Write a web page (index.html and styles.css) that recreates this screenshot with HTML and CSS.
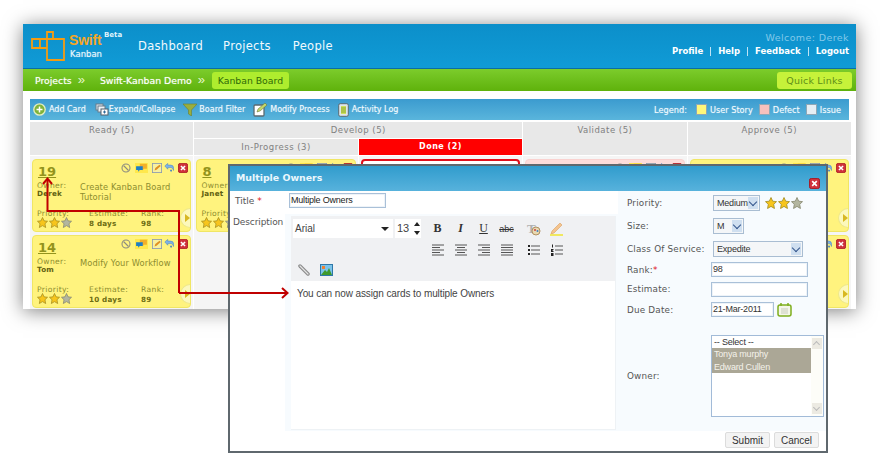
FILE: index.html
```html
<!DOCTYPE html>
<html lang="en">
<head>
<meta charset="utf-8">
<title>Swift Kanban</title>
<link rel="stylesheet" href="styles.css">
</head>
<body>
<svg class="defs" width="0" height="0" aria-hidden="true">
  <symbol id="star" viewBox="0 0 24 24"><polygon points="12,1 15.4,8.4 23,9.3 17.4,14.7 18.9,23 12,18.8 5.1,23 6.6,14.7 1,9.3 8.6,8.4" fill="#f7c51c" stroke="#a08a20" stroke-width="1.6"/></symbol>
  <symbol id="star-off" viewBox="0 0 24 24"><polygon points="12,1 15.4,8.4 23,9.3 17.4,14.7 18.9,23 12,18.8 5.1,23 6.6,14.7 1,9.3 8.6,8.4" fill="#b3b6a0" stroke="#85876c" stroke-width="1.6"/></symbol>
  <symbol id="ban" viewBox="0 0 12 12"><circle cx="6" cy="6" r="4.8" fill="none" stroke="#8c8c80" stroke-width="1.3"/><path d="M3 3l6 6" stroke="#8c8c80" stroke-width="1.3"/></symbol>
  <symbol id="chat" viewBox="0 0 14 12"><path d="M5 1h8.500v6H10l-2 2V7H5z" fill="#f2b02a"/><path d="M.5 4h8v4.500H5l-2 2v-2H.5z" fill="#1f7fc4"/></symbol>
  <symbol id="edit" viewBox="0 0 12 12"><rect x=".5" y=".5" width="11" height="11" fill="#f8f0a0" stroke="#8a9ab0"/><path d="M3 9l1-3 5-4 1.500 1.500-5 4.500z" fill="#e09020"/></symbol>
  <symbol id="undo" viewBox="0 0 12 12"><path d="M1 3.500L4.500.5v2H8a3.500 3.500 0 0 1 3.500 3.500v3C11 7 9.500 5.500 8 5.500H4.500v2z" fill="#7fb2e6" stroke="#3f7fc5" stroke-width=".6"/><path d="M7 8h3l-1.500 3z" fill="#3f7fc5"/></symbol>
  <symbol id="close" viewBox="0 0 12 12"><rect x=".5" y=".5" width="11" height="11" rx="2" fill="#d0313c" stroke="#a9141e"/><path d="M3.500 3.500l5 5M8.500 3.500l-5 5" stroke="#fff" stroke-width="1.800"/></symbol>
  <symbol id="align-left" viewBox="0 0 12 12"><path d="M0 1h12M0 3.500h8M0 6h12M0 8.500h8M0 11h12" stroke="#555" fill="none"/></symbol>
  <symbol id="align-center" viewBox="0 0 12 12"><path d="M0 1h12M2 3.500h8M0 6h12M2 8.500h8M0 11h12" stroke="#555" fill="none"/></symbol>
  <symbol id="align-right" viewBox="0 0 12 12"><path d="M0 1h12M4 3.500h8M0 6h12M4 8.500h8M0 11h12" stroke="#555" fill="none"/></symbol>
  <symbol id="align-full" viewBox="0 0 12 12"><path d="M0 1h12M0 3.500h12M0 6h12M0 8.500h12M0 11h12" stroke="#555" fill="none"/></symbol>
  <symbol id="list-ul" viewBox="0 0 12 12"><path d="M3 2h9M3 6h9M3 10h9" stroke="#555" fill="none"/><path d="M0 1h2v2H0zM0 5h2v2H0zM0 9h2v2H0z" fill="#222"/></symbol>
  <symbol id="list-ol" viewBox="0 0 12 12"><path d="M4 2h8M4 6h8M4 10h8" stroke="#555" fill="none"/><path d="M1 .5h1v3H1zM0 5h2.500v1L1 7h1.500v1H0zM0 9h2.500v3H0z" fill="#222"/></symbol>
</svg>

<div class="app">
  <header class="topbar">
    <div class="logo">
      <svg class="logo-mark" viewBox="0 0 36 30" width="36" height="30"><path d="M16 8h17v21H16zM16 8V1h6v7M16 8H1v9h15M9 8v9" fill="none" stroke="#f39c12" stroke-width="1.800"/></svg>
      <div class="logo-text"><span class="logo-swift">Swift</span><span class="logo-kanban">Kanban</span></div>
      <span class="logo-beta">Beta</span>
    </div>
    <nav class="mainnav"><span>Dashboard</span><span>Projects</span><span>People</span></nav>
    <div class="userbox">
      <div class="welcome">Welcome: Derek</div>
      <div class="userlinks"><span>Profile</span><i></i><span>Help</span><i></i><span>Feedback</span><i></i><span>Logout</span></div>
    </div>
  </header>

  <div class="crumbbar">
    <span class="crumb">Projects</span><span class="chev">&raquo;</span>
    <span class="crumb crumb-second">Swift-Kanban Demo</span><span class="chev">&raquo;</span>
    <span class="crumb-current">Kanban Board</span>
    <span class="quick">Quick Links</span>
  </div>

  <div class="content">
    <div class="toolbar">
      <span class="tool tool-add"><svg width="13" height="13" viewBox="0 0 13 13"><circle cx="6.500" cy="6.500" r="5.700" fill="#7fb33a" stroke="#e4efc4" stroke-width="1.300"/><path d="M6.500 3.500v6M3.500 6.500h6" stroke="#fff" stroke-width="1.500"/></svg>Add Card</span>
      <span class="tool tool-expand"><svg width="14" height="13" viewBox="0 0 14 13"><rect x="1" y="1" width="7" height="6" fill="#dfe7ee" stroke="#6b7c8a"/><rect x="3" y="3" width="7" height="6" fill="#eef2f6" stroke="#6b7c8a"/><rect x="6" y="6" width="7" height="6" fill="#fff" stroke="#52606c"/><path d="M9.500 7.500v3M8 9h3" stroke="#2a6a9a"/></svg>Expand/Collapse</span>
      <span class="tool tool-filter"><svg width="14" height="13" viewBox="0 0 14 13"><path d="M0 1h14L8.500 7v6L5.500 11V7z" fill="#9aae3e" stroke="#6f7f2a" stroke-width=".6"/></svg>Board Filter</span>
      <span class="tool tool-modify"><svg width="15" height="15" viewBox="0 0 15 15"><rect x="1" y="3" width="10" height="11" rx="1" fill="#fff" stroke="#5a6a72" stroke-width="1.300"/><path d="M4 10l1-3 7-6 2 2-7 6z" fill="#c4d66a" stroke="#5a6a2a" stroke-width=".5"/></svg>Modify Process</span>
      <span class="tool tool-log"><svg width="11" height="14" viewBox="0 0 11 14"><rect x=".7" y=".7" width="9.600" height="12.600" rx="1.500" fill="#dfe6ea" stroke="#5a6a72"/><rect x="3" y="3" width="5" height="8" fill="#cfe05c"/><path d="M3 5h5M3 7h5M3 9h5" stroke="#6f8f20" stroke-width=".7"/></svg>Activity Log</span>
      <span class="legend">
        <span class="legend-title">Legend:</span>
        <i class="swatch swatch-story"></i><span>User Story</span>
        <i class="swatch swatch-defect"></i><span>Defect</span>
        <i class="swatch swatch-issue"></i><span>Issue</span>
      </span>
    </div>

    <div class="board-head">
      <div class="hc hc-ready">Ready (5)</div>
      <div class="hc hc-develop">Develop (5)</div>
      <div class="hc hc-validate">Validate (5)</div>
      <div class="hc hc-approve">Approve (5)</div>
      <div class="hc">In-Progress (3)</div>
      <div class="hc hc-done">Done (2)</div>
    </div>

    <div class="lanes">
      <div class="lane">
        <article class="card">
          <div class="card-top"><a class="card-no">19</a><span class="card-icons"><svg><use href="#ban"/></svg><svg><use href="#chat"/></svg><svg><use href="#edit"/></svg><svg><use href="#undo"/></svg><svg><use href="#close"/></svg></span></div>
          <div class="card-mid"><div class="owner"><span>Owner:</span><b>Derek</b></div><div class="card-title">Create Kanban Board Tutorial</div></div>
          <div class="card-foot"><div class="f1"><span>Priority:</span><em><svg><use href="#star"/></svg><svg><use href="#star"/></svg><svg><use href="#star-off"/></svg></em></div><div class="f2"><span>Estimate:</span><b>8 days</b></div><div class="f3"><span>Rank:</span><b>98</b></div></div>
          <span class="card-tab"></span>
        </article>
        <article class="card">
          <div class="card-top"><a class="card-no">14</a><span class="card-icons"><svg><use href="#ban"/></svg><svg><use href="#chat"/></svg><svg><use href="#edit"/></svg><svg><use href="#undo"/></svg><svg><use href="#close"/></svg></span></div>
          <div class="card-mid"><div class="owner"><span>Owner:</span><b>Tom</b></div><div class="card-title">Modify Your Workflow</div></div>
          <div class="card-foot"><div class="f1"><span>Priority:</span><em><svg><use href="#star"/></svg><svg><use href="#star"/></svg><svg><use href="#star-off"/></svg></em></div><div class="f2"><span>Estimate:</span><b>10 days</b></div><div class="f3"><span>Rank:</span><b>89</b></div></div>
          <span class="card-tab"></span>
        </article>
      </div>
      <div class="lane">
        <article class="card">
          <div class="card-top"><a class="card-no">8</a><span class="card-icons"><svg><use href="#ban"/></svg><svg><use href="#chat"/></svg><svg><use href="#edit"/></svg><svg><use href="#undo"/></svg><svg><use href="#close"/></svg></span></div>
          <div class="card-mid"><div class="owner"><span>Owner:</span><b>Janet</b></div></div>
          <div class="card-foot"><div class="f1"><span>Priority:</span><em><svg><use href="#star"/></svg><svg><use href="#star"/></svg><svg><use href="#star-off"/></svg></em></div></div>
        </article>
      </div>
      <div class="lane"><div class="card card-selected"></div></div>
      <div class="lane"><div class="card card-defect"><div class="card-top"><span></span><span class="card-icons"><svg><use href="#ban"/></svg><svg><use href="#chat"/></svg><svg><use href="#edit"/></svg><svg><use href="#undo"/></svg><svg><use href="#close"/></svg></span></div></div></div>
      <div class="lane">
        <div class="card"><div class="card-top"><span></span><span class="card-icons"><svg><use href="#ban"/></svg><svg><use href="#chat"/></svg><svg><use href="#edit"/></svg><svg><use href="#undo"/></svg><svg><use href="#close"/></svg></span></div><span class="card-tab"></span></div>
        <div class="card"><div class="card-top"><span></span><span class="card-icons"><svg><use href="#ban"/></svg><svg><use href="#chat"/></svg><svg><use href="#edit"/></svg><svg><use href="#undo"/></svg><svg><use href="#close"/></svg></span></div><span class="card-tab"></span></div>
      </div>
    </div>
  </div>
</div>

<section class="modal">
  <header class="modal-head"><h2>Multiple Owners</h2><svg class="modal-close"><use href="#close"/></svg></header>
  <div class="modal-body">
    <div class="modal-left">
      <div class="title-row"><label class="lbl-title">Title <b>*</b></label><div class="field title-field">Multiple Owners</div></div>
      <div class="desc-row">
        <label class="lbl-desc">Description</label>
        <div class="editor-wrap">
          <div class="editor">
            <div class="ed-tools">
              <div class="ed-row">
                <div class="ed-font">Arial<i class="caret"></i></div>
                <div class="ed-size">13<span class="spin"><i class="up"></i><i class="down"></i></span></div>
                <span class="btn b-bold">B</span><span class="btn b-ital">I</span><span class="btn b-under">U</span><span class="btn b-strike">abc</span>
                <span class="btn"><svg width="15" height="15" viewBox="0 0 15 15"><text x="1" y="12" class="tcolor">T</text><circle cx="10" cy="10" r="4" fill="#e8d8b0" stroke="#b09060"/><circle cx="9" cy="9" r="1" fill="#d04040"/><circle cx="11.500" cy="10" r="1" fill="#4080c0"/></svg></span>
                <span class="btn"><svg width="15" height="15" viewBox="0 0 15 15"><path d="M3 10l8-8 2 2-8 8-3 1z" fill="#f5c48e" stroke="#d8a060" stroke-width=".6"/><rect x="1" y="13" width="13" height="2" fill="#f0e860"/></svg></span>
              </div>
              <div class="ed-row ed-row2">
                <span class="btn"><svg class="al"><use href="#align-left"/></svg></span><span class="btn"><svg class="al"><use href="#align-center"/></svg></span><span class="btn"><svg class="al"><use href="#align-right"/></svg></span><span class="btn"><svg class="al"><use href="#align-full"/></svg></span><span class="btn"><svg class="al"><use href="#list-ul"/></svg></span><span class="btn"><svg class="al"><use href="#list-ol"/></svg></span>
              </div>
              <div class="ed-row ed-row3">
                <span class="btn"><svg width="12" height="12" viewBox="0 0 12 12"><path d="M2 2l8 8" stroke="#8a8a8a" stroke-width="3.500" stroke-linecap="round"/><path d="M2 2l8 8" stroke="#e4e4e4" stroke-width="1.200" stroke-linecap="round"/></svg></span>
                <span class="btn"><svg width="13" height="12" viewBox="0 0 13 12"><rect x=".5" y=".5" width="12" height="11" fill="#7cc4ea" stroke="#2f78a8"/><path d="M1 11l4-5 2 2 2-4 3 7z" fill="#3f9a2c"/><rect x="2" y="2" width="3" height="3" fill="#f08030"/></svg></span>
              </div>
            </div>
            <div class="ed-text">You can now assign cards to multiple Owners</div>
          </div>
        </div>
      </div>
    </div>
    <div class="modal-right">
      <div class="frow r23"><label>Priority:</label><div class="sel sel-pri">Medium<i class="selbtn"></i></div><span class="stars"><svg><use href="#star"/></svg><svg><use href="#star"/></svg><svg><use href="#star-off"/></svg></span></div>
      <div class="frow r23"><label>Size:</label><div class="sel sel-size">M<i class="selbtn"></i></div></div>
      <div class="frow r23"><label>Class Of Service:</label><div class="sel sel-cos">Expedite<i class="selbtn"></i></div></div>
      <div class="frow r19"><label>Rank:<b>*</b></label><div class="field num-field">98</div></div>
      <div class="frow r20"><label>Estimate:</label><div class="field num-field"></div></div>
      <div class="frow r21"><label>Due Date:</label><div class="field date-field">21-Mar-2011</div><svg class="cal" width="15" height="15" viewBox="0 0 15 15"><rect x="1" y="3" width="13" height="11" rx="2" fill="#f4f6e8" stroke="#7fae1e" stroke-width="1.500"/><path d="M4 1v3M11 1v3" stroke="#7fae1e" stroke-width="1.500"/><path d="M4 7h7M4 9h7M4 11h7" stroke="#c8ccbc"/></svg></div>
      <div class="frow owner-row"><label>Owner:</label>
        <div class="listbox">
          <div class="opts"><div>-- Select --</div><div class="on">Tonya murphy</div><div class="on">Edward Cullen</div></div>
          <div class="scroll"><i class="su"></i><i class="sd"></i></div>
        </div>
      </div>
    </div>
  </div>
  <footer class="modal-foot"><span class="mbtn">Submit</span><span class="mbtn">Cancel</span></footer>
</section>

<svg class="callouts" width="880" height="470" viewBox="0 0 880 470" aria-hidden="true">
  <path d="M179 293V211H47.500V179" fill="none" stroke="#c00000" stroke-width="2"/>
  <path d="M43 184l4.500-5.500 4.500 5.500" fill="none" stroke="#c00000" stroke-width="2"/>
  <path d="M179 293H287" fill="none" stroke="#c00000" stroke-width="2"/>
  <path d="M282 288l5.500 5-5.500 5" fill="none" stroke="#c00000" stroke-width="2"/>
</svg>
</body>
</html>
```
FILE: styles.css
```css
* { box-sizing: border-box; }
html, body { margin: 0; padding: 0; background: #fff; }
body { width: 880px; height: 470px; overflow: hidden; position: relative; font-family: "DejaVu Sans", sans-serif; }
.defs { position: absolute; }
i, em { font-style: normal; }

.app { margin: 24px 0 0 23px; width: 833px; height: 285px; background: #fff; box-shadow: 0 2px 18px rgba(0,0,0,.5); overflow: hidden; }

.topbar { height: 45px; background: linear-gradient(#0c8fca, #109bd6); border-bottom: 1px solid #0b6ea6; display: flex; color: #fff; }
.logo { width: 115px; position: relative; display: flex; padding: 7px 0 0 8px; flex: none; }
.logo-mark { flex: none; }
.logo-text { display: flex; flex-direction: column; margin-left: 2px; }
.logo-swift { font: bold 14px/15px "Liberation Sans", sans-serif; letter-spacing: -.2px; color: #f5a623; margin-top: 2px; }
.logo-kanban { font: 8.500px/11px "DejaVu Sans", sans-serif; color: #e8f6fc; text-shadow: 0 0 1px rgba(255,255,255,.6); margin: 1px 0 0 1px; }
.logo-beta { font: bold 7px/8px "DejaVu Sans", sans-serif; color: #dff2fb; margin: 0 0 0 2px; }
.mainnav { display: flex; gap: 20px; padding-top: 14px; font-size: 11.500px; line-height: 16px; letter-spacing: .3px; color: #f1f9fd; }
.mainnav span:last-child { margin-left: 2px; }
.userbox { margin-left: auto; padding: 7px 7px 0 0; text-align: right; font-size: 8.500px; }
.welcome { color: #82c9ea; line-height: 14px; letter-spacing: .4px; font-size: 9.500px; }
.userlinks { display: flex; justify-content: flex-end; align-items: center; font-weight: bold; line-height: 12px; }
.userlinks i { width: 1px; height: 9px; background: #bfe3f5; margin: 0 7px; }

.crumbbar { height: 22px; background: linear-gradient(#7ccc2c, #5fb20c); display: flex; align-items: center; font-size: 9.300px; color: #fff; padding-left: 12px; text-shadow: 0 0 1px rgba(255,255,255,.6); }
.chev { font: 13px/13px "Liberation Sans", sans-serif; margin: -2px 0 0 6px; color: #e4f6c8; text-shadow: none; }
.crumb-second { margin-left: 15px; }
.crumb-current { margin-left: 7px; width: 77px; height: 17px; line-height: 17px; text-align: center; border-radius: 3px; background: #aeed2e; color: #2f6a08; text-shadow: none; }
.quick { margin-left: auto; margin-right: 4px; width: 75px; height: 17px; line-height: 17px; text-align: center; border-radius: 3px; background: #c6f23a; color: #5d8f18; font-size: 9.500px; letter-spacing: .2px; text-shadow: none; }

.content { padding: 8px 0 0 7px; }
.toolbar { width: 819px; height: 21px; background: linear-gradient(#3b9bcf, #5ab5dc); display: flex; align-items: center; font-size: 8px; color: #f2fafe; padding-left: 3px; text-shadow: 0 0 1px rgba(255,255,255,.5); }
.tool { display: flex; align-items: center; gap: 2px; margin-right: 8px; white-space: nowrap; }
.tool-add { gap: 3px; margin-right: 9px; }
.tool-expand { gap: 0; }
.tool-log { gap: 3px; }
.legend { margin-left: auto; display: flex; align-items: center; padding-right: 8px; gap: 3px; font-size: 8.200px; }
.legend-title { margin-right: 3px; }
.swatch { width: 11px; height: 11px; border: 1px solid #8fa7b6; margin-left: 3px; }
.swatch-story { background: #fff77a; }
.swatch-defect { background: #f7c1bd; }
.swatch-issue { background: #e6eef4; }

.board-head { width: 821px; margin-top: 2px; display: grid; grid-template-columns: repeat(5, 1fr); grid-template-rows: 16px 16px; gap: 1px; }
.hc { background: #e8e8e8; color: #808080; font-size: 8.500px; letter-spacing: .5px; text-align: center; line-height: 16px; }
.hc-ready { grid-row: 1 / 3; }
.hc-develop { grid-column: 2 / 4; }
.hc-validate { grid-column: 4; grid-row: 1 / 3; }
.hc-approve { grid-column: 5; grid-row: 1 / 3; }
.hc-done { background: #ff0000; color: #fff; font-weight: bold; font-size: 8px; }

.lanes { width: 821px; margin-top: 1px; display: grid; grid-template-columns: repeat(5, 1fr); gap: 1px; background: #fff; height: 153px; }
.lane { background: #f5f5f5; padding: 3px 2px 0; display: flex; flex-direction: column; gap: 3px; }
.card { position: relative; height: 73px; flex: none; border: 1px solid #f0e664; border-radius: 4px; background: #fff37e; padding: 0 0 0 4px; color: #8d8d2e; overflow: hidden; font-size: 7.600px; letter-spacing: .35px; }
.card-selected { border: 2px solid #e0101c; background: #fff; }
.card-defect { border-color: #f9d2d0; background: #fcdcda; }
.card-top { height: 22px; display: flex; justify-content: space-between; }
.card-no { font-size: 13px; line-height: 16px; font-weight: bold; color: #93931c; text-decoration: underline; margin: 4px 0 0 1px; letter-spacing: 0; }
.card-icons { display: flex; margin: 3px 2px 0 0; height: 11px; }
.card-icons svg { width: 10px; height: 10px; margin-left: 4px; }
.card-icons svg:nth-child(1) { margin-left: 0; }
.card-icons svg:nth-child(2) { width: 13px; background: #ffe84c; }
.card-icons svg:nth-child(4) { margin-left: 2px; }
.card-mid { height: 27px; display: flex; }
.owner { width: 43px; flex: none; display: flex; flex-direction: column; line-height: 8px; }
.owner b { color: #5f5f10; line-height: 8px; font-size: 7.200px; letter-spacing: .2px; }
.card-title { font-size: 8.300px; line-height: 10px; width: 100px; letter-spacing: .1px; }
.card-foot { display: flex; }
.card-foot > div { display: flex; flex-direction: column; line-height: 9px; }
.card-foot b { color: #6c6c12; margin-top: 1px; font-size: 7.200px; letter-spacing: .2px; }
.f1 { width: 52px; }
.f2 { width: 52px; }
.card-foot em { display: flex; gap: 1px; margin-top: -1px; }
.card-foot em svg { width: 11px; height: 11px; }
.card-tab { position: absolute; right: -1px; bottom: 3px; width: 11px; height: 20px; border-radius: 11px 0 0 11px; background: #fcf8bc; border: 1px solid #eee88a; border-right: 0; }
.card-tab::after { content: ""; position: absolute; left: 4px; top: 5px; border: 4px solid transparent; border-left: 5px solid #d8b822; }

.modal { position: absolute; left: 228px; top: 164px; width: 600px; height: 289px; border: 2px solid #5f686e; background: #fff; display: flex; flex-direction: column; }
.modal-head { height: 25px; flex: none; background: linear-gradient(#319ccd, #57b2dc); display: flex; position: relative; }
.modal-head h2 { margin: 5px 0 0 6px; font-size: 9.400px; line-height: 13px; color: #eaf7fd; font-weight: bold; }
.modal-close { position: absolute; right: 6px; top: 12px; width: 11px; height: 11px; }
.modal-body { height: 240px; flex: none; display: flex; }
.modal-left { width: 388px; flex: none; font-family: "Liberation Sans", sans-serif; }
.title-row { height: 23px; display: flex; align-items: flex-start; padding: 2px 0 0 5px; }
.lbl-title { width: 54px; font: 9px/12px "DejaVu Sans", sans-serif; color: #555; padding-top: 2px; }
.lbl-title b { color: #e01020; font-weight: normal; }
.field { border: 1px solid #a9c0d8; background: #fff; font: 9px/13px "Liberation Sans", sans-serif; color: #333; padding-left: 1px; letter-spacing: -.2px; box-shadow: inset 0 0 0 1px #eef3f8; }
.title-field { width: 97px; height: 15px; color: #222; }
.desc-row { display: flex; height: 217px; }
.lbl-desc { width: 55px; font: 9px/12px "DejaVu Sans", sans-serif; color: #555; padding: 2px 0 0 3px; flex: none; letter-spacing: -.1px; }
.editor-wrap { flex: 1; background: #f7fbfe; padding: 2px 2px 1px 6px; }
.editor { height: 214px; display: flex; flex-direction: column; background: #fff; border-right: 1px solid #eef2f5; border-bottom: 1px solid #eef2f5; }
.ed-tools { height: 65px; background: #f0f1f3; padding: 3px 0 0 2px; flex: none; }
.ed-row { display: flex; align-items: center; height: 19px; }
.ed-font { width: 100px; height: 19px; background: #fff; font-size: 10px; line-height: 19px; color: #444; padding-left: 2px; position: relative; margin-right: 2px; }
.caret { position: absolute; right: 4px; top: 8px; border: 4px solid transparent; border-top: 4px solid #222; }
.ed-size { width: 26px; height: 19px; background: #fff; font-size: 11px; line-height: 19px; color: #444; padding-left: 2px; position: relative; margin-right: 5px; }
.spin { position: absolute; right: 0; top: 1px; width: 8px; height: 17px; }
.up { position: absolute; left: 1px; top: 2px; border: 3px solid transparent; border-top: 0; border-bottom: 4px solid #222; }
.down { position: absolute; left: 1px; top: 11px; border: 3px solid transparent; border-bottom: 0; border-top: 4px solid #222; }
.btn { width: 23px; height: 19px; display: flex; align-items: center; justify-content: center; flex: none; font-size: 12px; color: #333; }
.b-bold { font: bold 12px "Liberation Serif", serif; }
.b-ital { font: italic bold 12px "Liberation Serif", serif; }
.b-under { font: 12px "Liberation Serif", serif; text-decoration: underline; }
.b-strike { font: 9px "Liberation Sans", sans-serif; text-decoration: line-through; margin-right: 4px; }
.tcolor { font: bold 13px "Liberation Serif", serif; fill: #b0b0b0; }
.ed-row2 { margin-top: 2px; padding-left: 133px; }
.ed-row2 .btn:nth-child(4) { margin-right: 4px; }
.ed-row3 { margin-top: 1px; }
.ed-row3 .btn:first-child { margin-left: -1px; }
.al { width: 12px; height: 12px; }
.ed-text { padding: 6px 0 0 6px; font-size: 10px; line-height: 14px; color: #444; letter-spacing: -.1px; }

.modal-right { flex: 1; background: #f7fbfe; font-size: 8.800px; color: #555; padding-left: 9px; letter-spacing: .2px; }
.frow { display: flex; align-items: center; }
.frow label { width: 84px; flex: none; }
.frow label b { color: #e01020; font-weight: normal; }
.r23 { height: 23px; }
.r19 { height: 19px; }
.r20 { height: 20px; }
.r21 { height: 21px; }
.sel { margin-left: 2px; height: 16px; border: 1px solid #a9bdd2; background: #f4f6f8; font: 9px/14px "Liberation Sans", sans-serif; color: #333; padding-left: 3px; position: relative; letter-spacing: -.2px; }
.selbtn { position: absolute; right: 1px; top: 1px; width: 10px; height: 12px; background: #cfdff0; }
.selbtn::after { content: ""; position: absolute; left: 2px; top: 2px; width: 5px; height: 5px; border: solid #34558c; border-width: 0 1.500px 1.500px 0; transform: rotate(45deg); }
.sel-pri { width: 47px; }
.sel-size { width: 31px; }
.sel-cos { width: 90px; }
.stars { display: flex; gap: 1px; margin-left: 5px; }
.stars svg { width: 12px; height: 12px; }
.num-field { width: 97px; height: 15px; }
.date-field { width: 63px; height: 15px; }
.cal { margin-left: 3px; }
.owner-row { margin-top: 15px; height: 82px; }
.listbox { width: 113px; height: 82px; border: 1px solid #a2bbd8; background: #fff; display: flex; font: 9px/12.300px "Liberation Sans", sans-serif; color: #333; letter-spacing: -.2px; }
.opts { flex: 1; }
.opts > div { padding-left: 2px; }
.on { background: #aba796; color: #f4f2ea; }
.scroll { width: 12px; background: #fdfdf8; position: relative; }
.su, .sd { position: absolute; left: 1px; width: 10px; height: 11px; background: #eceae2; }
.su { top: 2px; }
.sd { bottom: 2px; }
.su::after, .sd::after { content: ""; position: absolute; left: 2px; width: 4px; height: 4px; border: solid #bbb; border-width: 1px 0 0 1px; transform: rotate(45deg); top: 4px; }
.sd::after { transform: rotate(225deg); top: 2px; }
.modal-foot { flex: 1; display: flex; justify-content: flex-end; gap: 4px; padding: 1px 7px 0 0; }
.mbtn { width: 45px; height: 16px; border: 1px solid #dcdcdc; background: #f3f3f3; border-radius: 2px; text-align: center; font: 10px/15px "Liberation Sans", sans-serif; color: #333; }

.callouts { position: absolute; left: 0; top: 0; pointer-events: none; }
```
